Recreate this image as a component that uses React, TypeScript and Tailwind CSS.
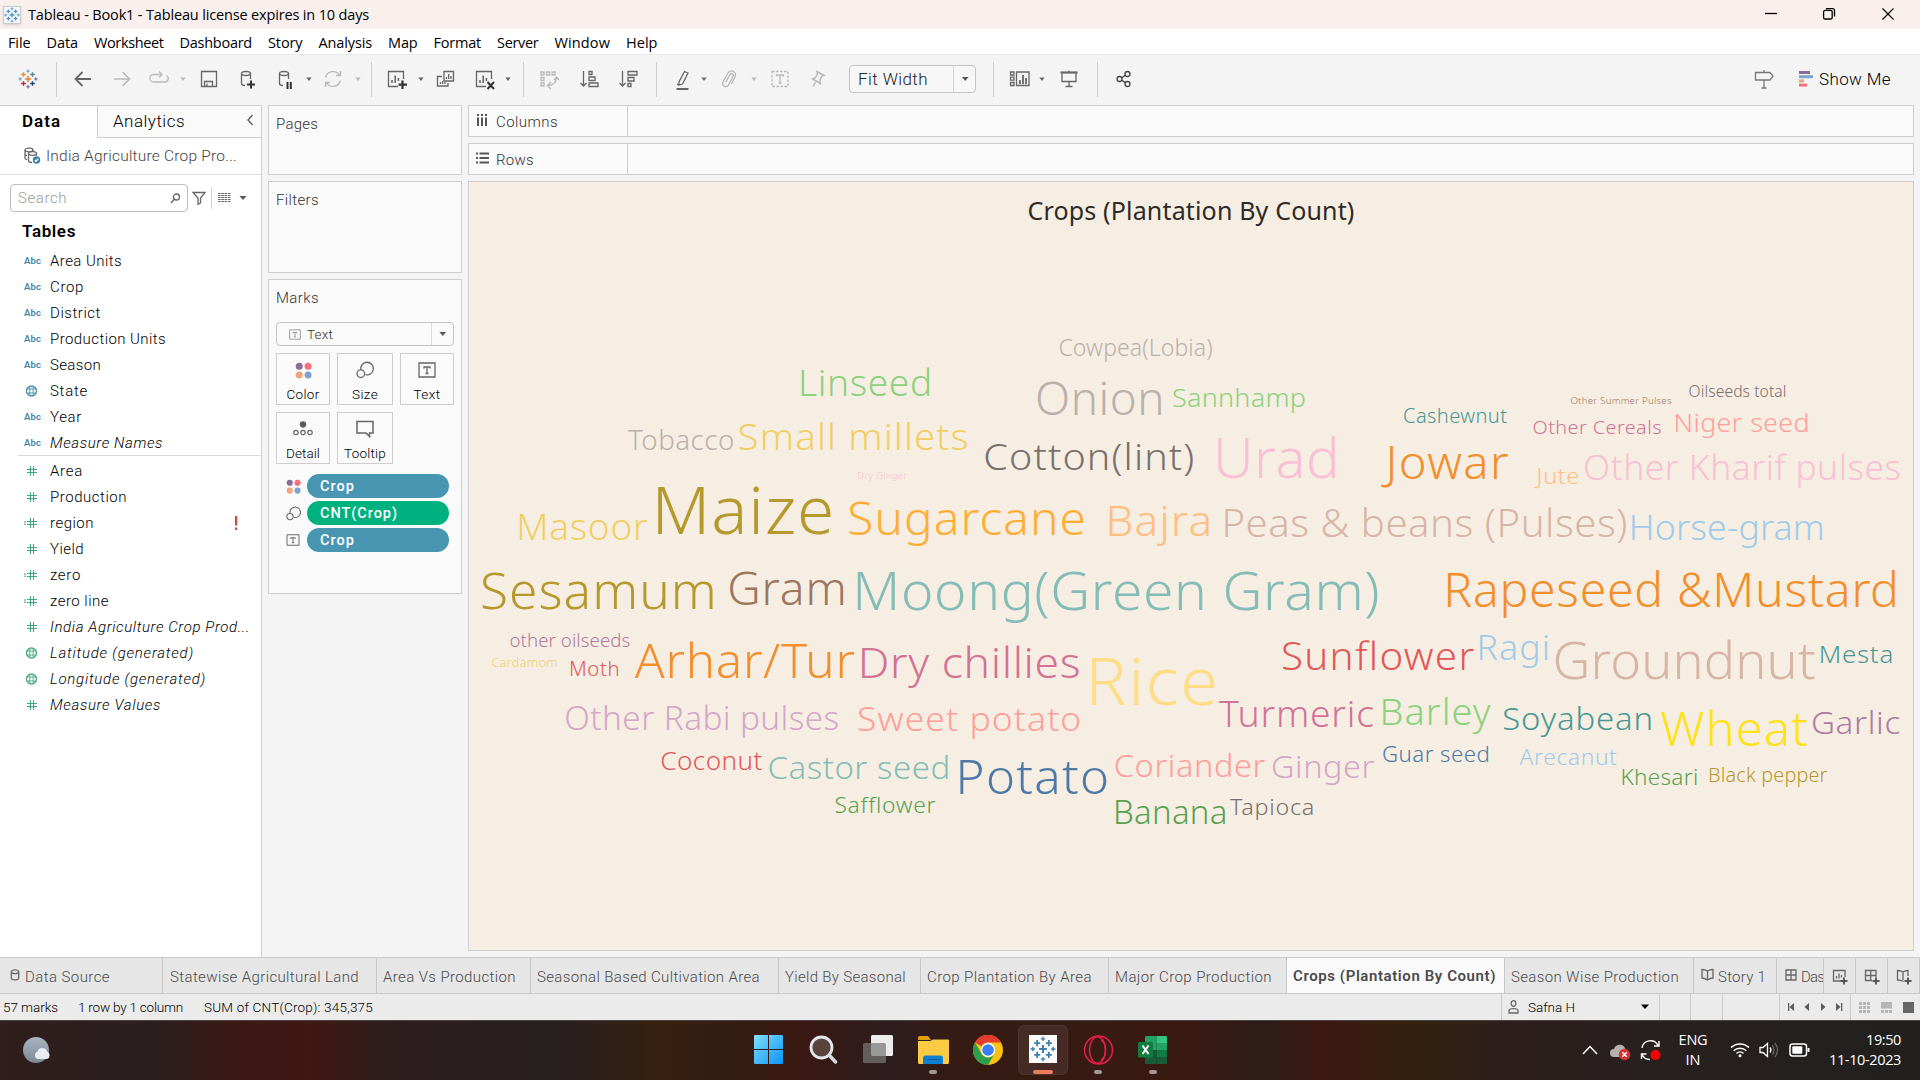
import React, { useLayoutEffect, useRef, useState } from "react";

/** Single-line label; when `w` is given the tracking is adjusted so that the text fills w pixels. */
function T({ children, w, className = "" }: { children: string; w?: number; className?: string }) {
  const ref = useRef<HTMLSpanElement>(null);
  const [ls, setLs] = useState(0);
  useLayoutEffect(() => {
    if (!w || !ref.current) return;
    const n = ref.current.getBoundingClientRect().width;
    setLs((w + 1 - n) / children.length);
  }, [w, children]);
  return (
    <span ref={ref} className={"inline-block shrink-0 whitespace-pre " + className} style={ls ? { letterSpacing: ls + "px" } : undefined}>
      {children}
    </span>
  );
}

type Word = [string, number, number, number, number, string];
// text, left, right, baseline, size, colour
const WORDS: Word[] = [
  ["Cowpea(Lobia)", 1059.4, 1212.3, 356, 22.9, "#bab0ac"],
  ["Linseed", 801, 929.5, 396, 36, "#8cd17d"],
  ["Tobacco", 628, 733.5, 449.7, 27, "#bab0ac"],
  ["Small millets", 738.6, 967.7, 449.7, 36, "#f1ce63"],
  ["Onion", 1037, 1161.8, 414.7, 45, "#bab0ac"],
  ["Sannhamp", 1173, 1305, 407, 26.5, "#8cd17d"],
  ["Cotton(lint)", 985.4, 1193, 469.5, 37, "#79706e"],
  ["Dry Ginger", 857.3, 907.6, 479, 9.2, "#fabfd2"],
  ["Maize", 657.6, 830.8, 533.3, 66, "#b6992d"],
  ["Sugarcane", 849.4, 1083.6, 534.7, 46, "#ffad34"],
  ["Bajra", 1109.7, 1209.6, 536, 42, "#ffbe7d"],
  ["Masoor", 519.3, 647.4, 540, 36, "#f1ce63"],
  ["Sesamum", 482, 713, 608.3, 50, "#b6992d"],
  ["Gram", 729.3, 843.4, 605, 45, "#9d7660"],
  ["Moong(Green Gram)", 857.3, 1377.6, 610, 54, "#86bcb6"],
  ["Urad", 1218, 1335.3, 477.7, 55.5, "#fabfd2"],
  ["Jowar", 1381.3, 1509, 479, 45, "#f28e2b"],
  ["Cashewnut", 1404, 1507.5, 423, 19.5, "#499894"],
  ["Other Summer Pulses", 1570.4, 1671, 403.7, 9.4, "#9d7660"],
  ["Oilseeds total", 1688.6, 1786, 397, 15.5, "#79706e"],
  ["Other Cereals", 1533.6, 1661.6, 434, 19, "#d37295"],
  ["Niger seed", 1675.6, 1808, 432, 26, "#ff9d9a"],
  ["Jute", 1534.5, 1578, 484, 22, "#ffbe7d"],
  ["Other Kharif pulses", 1585, 1900, 479.3, 34.5, "#fabfd2"],
  ["Peas & beans (Pulses)", 1224.5, 1626.7, 536.7, 39, "#d7b5a6"],
  ["Horse-gram", 1631.8, 1822, 540, 35.5, "#a0cbe8"],
  ["Rapeseed &Mustard", 1447.4, 1895.8, 606.7, 47, "#f28e2b"],
  ["other oilseeds", 510.5, 629.7, 647, 18.5, "#b07aa1"],
  ["Cardamom", 491.4, 556.6, 667, 12.2, "#f1ce63"],
  ["Moth", 570, 618, 676, 19.5, "#e15759"],
  ["Arhar/Tur", 634.8, 855, 678, 48, "#f28e2b"],
  ["Dry chillies", 862, 1079.4, 678, 43, "#d37295"],
  ["Rice", 1091.5, 1214.7, 705, 66, "#ffdd86"],
  ["Other Rabi pulses", 566.4, 838, 729.3, 32.5, "#d4a6c8"],
  ["Sweet potato", 858, 1079.4, 731, 33.5, "#ff9d9a"],
  ["Coconut", 661.3, 762.8, 770, 25.5, "#e15759"],
  ["Castor seed", 768.4, 948, 779, 32, "#86bcb6"],
  ["Potato", 959.8, 1107.3, 793.7, 47, "#4e79a7"],
  ["Coriander", 1114.8, 1265, 776.7, 31.5, "#ff9d9a"],
  ["Safflower", 835.5, 936, 812.7, 21.5, "#59a14f"],
  ["Banana", 1116, 1225, 824, 32.5, "#59a14f"],
  ["Sunflower", 1283, 1474.4, 669.7, 38, "#e15759"],
  ["Ragi", 1479.6, 1548, 660, 34, "#a0cbe8"],
  ["Groundnut", 1555.5, 1815, 678.3, 52, "#d7b5a6"],
  ["Mesta", 1820.8, 1892, 663, 24.6, "#499894"],
  ["Turmeric", 1218.9, 1373.9, 727, 36, "#d37295"],
  ["Barley", 1382.7, 1490.7, 724.7, 36, "#8cd17d"],
  ["Soyabean", 1503.3, 1651.4, 729.7, 31.5, "#499894"],
  ["Wheat", 1661, 1807.3, 746, 48, "#ffe119"],
  ["Garlic", 1812, 1900, 733.7, 32, "#b07aa1"],
  ["Ginger", 1272, 1373.9, 777.7, 31.5, "#d4a6c8"],
  ["Guar seed", 1383, 1489, 761.7, 21.5, "#4e79a7"],
  ["Arecanut", 1519.6, 1616.4, 765, 22, "#a0cbe8"],
  ["Khesari", 1622.5, 1697, 785, 22, "#59a14f"],
  ["Black pepper", 1709, 1827.8, 782, 19.5, "#b6992d"],
  ["Tapioca", 1230, 1312.4, 815, 22, "#79706e"],
];

function WordCloud() {
  const ctx = document.createElement("canvas").getContext("2d")!;
  return (
    <svg className="block h-full w-full" viewBox="469 182 1444 768" fontFamily="'Noto Sans', sans-serif" fontWeight={300}>
      {WORDS.map(([t, l, r, y, s, c]) => {
        ctx.font = `300 ${s}px "Noto Sans"`;
        const m = ctx.measureText(t);
        const ink = m.actualBoundingBoxLeft + m.actualBoundingBoxRight;
        // half of the slack widens the glyphs, the other half goes between them
        const k = (1 + (r - l) / ink) / 2;
        const gap = ((r - l) / k - ink) / (t.length - 1);
        return (
          <text key={t} transform={`translate(${l} ${y + 0.3}) scale(${k} 1)`} x={m.actualBoundingBoxLeft} fontSize={s} fill={c} letterSpacing={gap}>
            {t}
          </text>
        );
      })}
    </svg>
  );
}

function Svg({ children, w = 24, h = 24, c = "#666", className = "" }: { children: React.ReactNode; w?: number; h?: number; c?: string; className?: string }) {
  return (
    <svg width={w} height={h} viewBox={`0 0 ${w} ${h}`} fill="none" stroke={c} strokeWidth={1.3} className={"shrink-0 " + className}>
      {children}
    </svg>
  );
}

const OFF = "#b9b9b9";

function Caret({ c = "#666", className = "" }: { c?: string; className?: string }) {
  return (
    <svg width="8" height="8" viewBox="0 0 8 8" className={"shrink-0 " + className}>
      <path d="M1.4 2.5h5.2L4 6z" fill={c} />
    </svg>
  );
}

function Sep({ className = "" }: { className?: string }) {
  return <div className={"h-[35px] w-px shrink-0 bg-[#cfcfcf] " + className} />;
}

function Plus({ x, y, r, c, w = 1.4 }: { x: number; y: number; r: number; c: string; w?: number }) {
  return <path d={`M${x - r} ${y}h${2 * r}M${x} ${y - r}v${2 * r}`} stroke={c} strokeWidth={w} />;
}

function TableauMark({ size, mono, className = "" }: { size: number; mono?: string; className?: string }) {
  const c = (x: string) => mono || x;
  return (
    <svg width={size} height={size} viewBox="0 0 24 24" className={"shrink-0 " + className}>
      <Plus x={12} y={12} r={3.6} c={c("#eb812b")} w={1.9} />
      <Plus x={6.6} y={6.6} r={2.8} c={c("#eb912b")} w={1.7} />
      <Plus x={17.4} y={6.6} r={2.8} c={c("#5b879b")} w={1.7} />
      <Plus x={6.6} y={17.4} r={2.8} c={c("#c8203d")} w={1.7} />
      <Plus x={17.4} y={17.4} r={2.8} c={c("#1f447e")} w={1.7} />
      <Plus x={12} y={2.6} r={2.1} c={c("#7199a6")} w={1.2} />
      <Plus x={12} y={21.4} r={2.1} c={c("#5c6692")} w={1.2} />
      <Plus x={2.6} y={12} r={2.1} c={c("#7199a6")} w={1.2} />
      <Plus x={21.4} y={12} r={2.1} c={c("#5c6692")} w={1.2} />
    </svg>
  );
}

function TitleBar() {
  return (
    <header className="flex h-[29px] shrink-0 items-center bg-linear-to-r from-[#f9f0ee] via-[#f9efec] to-[#f9f0ee] pl-[3px] text-black">
      <div className="flex h-[18px] w-[18px] items-center justify-center border border-[#ccc] bg-[#f3f6f8] shadow">
        <TableauMark size={16} mono="#4f93c0" />
      </div>
      <T w={340} className="ml-[7px] font-['Open_Sans'] text-[14.5px]">Tableau - Book1 - Tableau license expires in 10 days</T>
      <Svg w={160} h={29} c="#000" className="ml-auto">
        <path d="M5 13.5h12" />
        <rect x="63.6" y="10.4" width="8.6" height="8.6" rx="1.6" />
        <path d="M66 8.6h6.5a2 2 0 0 1 2 2v6" />
        <path d="M122.5 8.5l11 11M133.5 8.5l-11 11" strokeWidth="1.1" />
      </Svg>
    </header>
  );
}

const MENU: [string, number][] = [["File", 22], ["Data", 31], ["Worksheet", 69], ["Dashboard", 72], ["Story", 34], ["Analysis", 53], ["Map", 29], ["Format", 47], ["Server", 41], ["Window", 55], ["Help", 31]];

function MenuBar() {
  return (
    <nav className="flex h-[25px] shrink-0 items-center gap-[16px] bg-white pt-[2px] pl-[8px] font-['Open_Sans'] text-[14.5px] text-black">
      {MENU.map(([m, w]) => (
        <T key={m} w={w - 0.5}>{m}</T>
      ))}
    </nav>
  );
}

function Toolbar() {
  return (
    <div className="flex h-[51px] shrink-0 items-center border-t border-[#e9e9e9] bg-[#f4f4f4] pb-[2px] pl-[17.5px]">
      <TableauMark size={20} className="mr-[2.5px]" />
      <Sep className="ml-[16px]" />
      <Svg className="ml-[14px]"><path d="M20 12H4.500M11.500 5l-7 7 7 7" strokeWidth="1.8" /></Svg>
      <Svg c={OFF} className="ml-[15px]"><path d="M4 12h15.500M12.500 5l7 7-7 7" strokeWidth="1.7" /></Svg>
      <Svg c={OFF} className="ml-[13px]"><path d="M14 7.500H6.500a3.500 3.500 0 0 0 0 7.500h11a3.500 3.500 0 0 0 2-6.500M12 4.500l3 3-3 3" /></Svg>
      <Caret c={OFF} className="ml-[8px]" />
      <Svg className="ml-[10px]"><path d="M4.500 4.500h15v15h-15zM7.500 19.500v-5h8v5M10 19.500v-3" /></Svg>
      <Svg className="ml-[14px]"><ellipse cx="11" cy="6.500" rx="4.500" ry="2" /><path d="M6.500 6.500v10c0 1 1.500 2 3.500 2M15.500 6.500V12" /><path d="M16 13.500v8M12 17.500h8" stroke="#333" strokeWidth="2" /></Svg>
      <Svg className="ml-[14px]"><ellipse cx="11" cy="6.500" rx="4.500" ry="2" /><path d="M6.500 6.500v10c0 1 1.500 2 3.500 2M15.500 6.500V12" /><path d="M14.500 15v7M17.800 15v7" stroke="#333" strokeWidth="2" /></Svg>
      <Caret className="ml-[8px]" />
      <Svg c={OFF} className="ml-[8px]"><path d="M4.500 10.500A7.800 7.800 0 0 1 18.500 8M19.500 13.500A7.800 7.800 0 0 1 5.500 16M19.500 4v4.500H15M4.500 20v-4.500H9" /></Svg>
      <Caret c={OFF} className="ml-[9px]" />
      <Sep className="ml-[9px]" />
      <Svg className="ml-[12px]"><path d="M14 19.500H4.500v-15h15V12" /><path d="M8 16v-3M11.200 16V8.500M14.400 14v-3" strokeWidth="1.600" /><path d="M18.500 13.500v8.500M14.500 17.700h8.500" stroke="#333" strokeWidth="2.200" /></Svg>
      <Caret className="ml-[9px]" />
      <Svg className="ml-[9px]"><path d="M10 4.500h9.500v9.500H10zM8 9.500H3.500v9.500H14v-3" /><path d="M12.500 12v-2M14.700 12V7M17 12V9M6.500 17v-2M8.700 17v-3M11 17v-2" /></Svg>
      <Svg className="ml-[14px]"><path d="M14 19.500H4.500v-15h15V12" /><path d="M8 16v-3M11.200 16V8.500M14.400 14v-3" strokeWidth="1.600" /><path d="M15.500 15l6.500 7M22 15l-6.500 7" stroke="#333" strokeWidth="2" /></Svg>
      <Caret className="ml-[8px]" />
      <Sep className="ml-[11px]" />
      <Svg c={OFF} className="ml-[13px]"><path d="M4 5h3v3H4zM9.500 5h3v3h-3zM15 5h3v3h-3zM4 10.500h3v3H4zM4 16h3v3H4zM19.500 10c0 5-2.500 8-8 8.500M14 15l-3.500 3.500L14 22M17 13l2.500-3 2.500 3" /></Svg>
      <Svg className="ml-[16px]"><path d="M6.500 4v15M3.500 16l3 3 3-3M12 4.500h3v3h-3zM12 10h6v3.500h-6zM12 16h9v3.500h-9z" /></Svg>
      <Svg className="ml-[15px]"><path d="M6.500 4v15M3.500 16l3 3 3-3M12 4.500h9v3.500h-9zM12 10.500h6V14h-6zM12 16.500h3v3h-3z" /></Svg>
      <Sep className="ml-[16px]" />
      <Svg className="ml-[14px]"><path d="M13.500 4.500l3.500 1.500-5.500 11-3.500 1 0-3zM6 17l2 1.500" /><path d="M5.500 22h12" strokeWidth="2" /></Svg>
      <Caret className="ml-[5px]" />
      <Svg c={OFF} className="ml-[9px]"><path d="M9 15l4-7.500a1.800 1.800 0 0 1 3.200 1.800l-5 9.200a3.200 3.200 0 0 1-5.500-3L11 6a3.900 3.900 0 0 1 7 3.800L14.500 17" /></Svg>
      <Caret c={OFF} className="ml-[9px]" />
      <Svg c={OFF} className="ml-[10px]"><path d="M4 4.500h16v15H4z" strokeDasharray="2.500 1.500" /><path d="M8.500 9.500V8h7v1.500M12 8v8M10.500 16h3" /></Svg>
      <Svg c={OFF} className="ml-[13px]"><path d="M12 4.500l7 4-2 .5-2 4 .5 3.500-8-4.500 3-1.500 2-4zM10.500 15L8 19.500" strokeWidth="1.500" /></Svg>
      <div className="ml-[20px] flex h-[28px] w-[127px] shrink-0 items-center rounded-sm border border-[#c4c4c4] bg-[#f7f7f7]">
        <T w={69} className="ml-[8px] pt-[2px] font-[Roboto] text-[17px] font-[350] text-[#222]">Fit Width</T>
        <div className="ml-auto flex h-full w-[22px] items-center justify-center border-l border-[#d4d4d4]"><svg width="8" height="6"><path d="M1 1h6.500L4.200 5z" fill="#555" /></svg></div>
      </div>
      <Sep className="ml-[17px]" />
      <Svg className="ml-[14px]"><path d="M8.500 5h12.500v13.500H8.500zM2.500 5h3.500v3H2.500zM2.500 10.200h3.500v3H2.500zM2.500 15.500h3.500v3H2.500z" /><path d="M12 17v-4M15 17V8M18 17v-6" strokeWidth="1.800" /></Svg>
      <Caret className="ml-[6px]" />
      <Svg className="ml-[11px]"><path d="M3.500 5.500h17" strokeWidth="2.200" /><path d="M5 6v8.500h14V6M12 3.500V5M12 15v4.500M8.500 19.500h7" /></Svg>
      <Sep className="ml-[16px]" />
      <Svg c="#444" className="ml-[14px]"><circle cx="7.500" cy="12" r="2.500" /><circle cx="15.500" cy="7" r="2.500" /><circle cx="15.500" cy="17" r="2.500" /><path d="M9.700 10.700l3.600-2.300M9.700 13.300l3.600 2.300" /></Svg>
      <Svg className="ml-auto" c="#777"><path d="M12 3v2M12 13v8M9.500 21h5M3.500 5.500h14.500l3 3.700-3 3.800H3.500z" /></Svg>
      <svg width="14" height="16" className="ml-[23px] shrink-0"><path d="M0 0h11v3H0z" fill="#8a6f95" /><path d="M0 4.200h14v3H0z" fill="#7fa3cd" /><path d="M0 8.400h5v3H0z" fill="#f0a57c" /><path d="M0 12.600h8v3H0z" fill="#f5707f" /></svg>
      <T w={71} className="ml-[6px] mr-[29px] pt-px font-[Roboto] text-[17px] font-[350] text-black">Show Me</T>
    </div>
  );
}

function Globe({ c }: { c: string }) {
  return (
    <Svg w={16} h={16} c={c}><circle cx="7.500" cy="8" r="5" /><path d="M2.500 6h10M2.500 10h10M5.800 3.500v9M9.200 3.500v9" strokeWidth=".9" /></Svg>
  );
}
function Hash({ calc }: { calc?: boolean }) {
  return (
    <Svg w={16} h={16} c="#3fa57f"><path d="M6.500 3v10M9.500 3v10M3 6.500h10M3 9.500h10" strokeWidth="1" />{calc && <path d="M-1 7h3M-1 9.200h3" strokeWidth="1" />}</Svg>
  );
}

type Field = [string, number, string, string?];
const DIMS: Field[] = [["Area Units", 71, "abc"], ["Crop", 33, "abc"], ["District", 50, "abc"], ["Production Units", 115, "abc"], ["Season", 50, "abc"], ["State", 37, "globe"], ["Year", 31, "abc"], ["Measure Names", 112, "abc", "i"]];
const MEAS: Field[] = [["Area", 32, "hash"], ["Production", 76, "hash"], ["region", 43, "calc", "!"], ["Yield", 33, "hash"], ["zero", 30, "calc"], ["zero line", 58, "calc"], ["India Agriculture Crop Prod...", 199, "hash", "i"], ["Latitude (generated)", 143, "gglobe", "i"], ["Longitude (generated)", 155, "gglobe", "i"], ["Measure Values", 110, "hash", "i"]];

function FieldRow({ f }: { f: Field }) {
  const [name, w, kind, flag] = f;
  return (
    <div className="flex h-[26px] items-center pl-[24px] pr-[23px]">
      <div className="flex w-[26px] shrink-0 items-center">
        {kind === "abc" && <T w={16} className="text-[9.5px] font-semibold text-[#4287a5]">Abc</T>}
        {kind === "globe" && <Globe c="#4a8fab" />}
        {kind === "gglobe" && <Globe c="#4aa982" />}
        {kind === "hash" && <Hash />}
        {kind === "calc" && <Hash calc />}
      </div>
      <T w={w} className={flag === "i" ? "text-[15px] font-[350] italic text-black" : "text-[15px] font-[350] text-black"}>{name}</T>
      {flag === "!" && (
        <svg width="4" height="14" className="ml-auto shrink-0"><path d="M1 0h2.300v9.500H1zM1 11.500h2.300V14H1z" fill="#cf4f44" /></svg>
      )}
    </div>
  );
}

function DataPane() {
  return (
    <aside className="flex w-[262px] shrink-0 flex-col border-t border-r border-[#cecece] bg-white font-[Roboto]">
      <div className="flex h-[32px] shrink-0">
        <div className="w-[97px] pl-[22px] pt-[3px]"><T w={38} className="text-[17px] font-semibold text-black">Data</T></div>
        <div className="flex flex-1 items-center border-b border-l border-[#cecece] bg-[#fafafa] pl-[15px] pr-[7px]">
          <T w={71} className="pt-px text-[17px] font-[350] text-black">Analytics</T>
          <Svg w={8} h={12} className="-mt-[3px] ml-auto"><path d="M6.500 1L2 6l4.500 5" strokeWidth="1.500" /></Svg>
        </div>
      </div>
      <div className="flex h-[37px] shrink-0 items-center border-b border-[#dedede] pl-[23px]">
        <Svg w={18} h={18}><ellipse cx="6" cy="3" rx="4" ry="1.800" /><path d="M2 3v8c0 1 1 1.500 2 1.700M2 7c0 1 1 1.500 2 1.500M10 3v1" /><ellipse cx="9.500" cy="6.500" rx="4" ry="1.800" /><path d="M5.500 6.500v7c0 1 1.500 2 3.500 2M13.500 6.500v2" /><circle cx="13.500" cy="13" r="3.700" fill="#3b82a6" stroke="none" /><path d="M11.800 13l1.200 1.300 2.200-2.500" stroke="#fff" /></Svg>
        <T w={190} className="ml-[5px] pt-px text-[15.500px] font-[350] text-[#444]">India Agriculture Crop Pro...</T>
      </div>
      <div className="mt-[9px] flex h-[28px] shrink-0 items-center pl-[10px]">
        <div className="flex h-full w-[178px] items-center rounded-sm border border-[#bdbdbd] pl-[7px] pr-[6px]">
          <T w={48} className="text-[15px] font-[350] text-[#999]">Search</T>
          <Svg w={11} h={11} className="ml-auto"><circle cx="6.500" cy="4" r="3" /><path d="M4.400 6.300L1 10" /></Svg>
        </div>
        <Svg w={14} h={14} className="ml-[4px]"><path d="M1 1.500h12L8.500 7v5L6 13.500V7z" /></Svg>
        <div className="ml-[5px] h-[22px] w-px bg-[#cfcfcf]" />
        <Svg w={13} h={10} className="ml-[6px]"><path d="M0 .5h12.500M0 2.500h12.500M0 4.500h12.500M0 6.500h12.500M0 8.500h12.500" strokeDasharray="2.600 .7" strokeWidth="1" /></Svg>
        <svg width="8" height="6" className="ml-[8px]"><path d="M.5 1h7L4 5z" fill="#555" /></svg>
      </div>
      <div className="flex h-[35px] shrink-0 items-center pl-[22px] pt-[5px]"><T w={53} className="text-[17px] font-semibold text-black">Tables</T></div>
      <div className="h-[208px] shrink-0 pt-px">{DIMS.map((f) => <FieldRow key={f[0]} f={f} />)}</div>
      <div className="ml-[18px] h-px bg-[#dadada]" />
      <div className="pt-[2px]">{MEAS.map((f) => <FieldRow key={f[0]} f={f} />)}</div>
    </aside>
  );
}

function ColorDots({ s }: { s: number }) {
  return (
    <svg width={s} height={s} viewBox="0 0 16 16" className="shrink-0"><circle cx="4" cy="4" r="3.300" fill="#8a6f95" /><circle cx="12.300" cy="4" r="3.300" fill="#f5707f" /><circle cx="4" cy="12.300" r="3.300" fill="#f0a57c" /><circle cx="12.300" cy="12.300" r="3.300" fill="#7fa3cd" /></svg>
  );
}
function SizeIcon({ s }: { s: number }) {
  return (
    <svg width={s} height={s} viewBox="0 0 18 18" fill="none" stroke="#666" strokeWidth="1.300" className="shrink-0"><path d="M4.800 8.500a6.300 6.300 0 1 1 4.800 5.200" /><circle cx="4.800" cy="12.700" r="3.800" /></svg>
  );
}
function TextIcon({ w, h }: { w: number; h: number }) {
  return (
    <svg width={w} height={h} viewBox="0 0 18 16" fill="none" stroke="#666" strokeWidth="1.300" className="shrink-0"><path d="M1 1h16v14H1zM6 6.500V5h6v1.500M9 5v6.500M7.500 11.500h3" /></svg>
  );
}

const card = "border border-[#cecece] bg-[#fafafa] pl-[7px]";

function MarkButton({ w, label, children }: { w: number; label: string; children: React.ReactNode }) {
  return (
    <div className="flex h-[52px] flex-col items-center border border-[#cecece] bg-[#fafafa] pt-[6px]">
      <div className="flex h-[20px] items-center">{children}</div>
      <T w={w} className="mt-[5px] text-[13.500px] leading-[18px] font-[350] text-black">{label}</T>
    </div>
  );
}

function Pill({ icon, label, w, green }: { icon: React.ReactNode; label: string; w: number; green?: boolean }) {
  return (
    <div className="flex h-[24px] items-center">
      <div className="flex w-[31px] items-center pl-[10px]">{icon}</div>
      <div className={green ? "flex h-full w-[142px] items-center rounded-full bg-[#00b180] pl-[13px] pt-px" : "flex h-full w-[142px] items-center rounded-full bg-[#4996b2] pl-[13px] pt-px"}>
        <T w={w} className="text-[14.500px] font-medium text-white">{label}</T>
      </div>
    </div>
  );
}

function Shelves() {
  return (
    <div className="ml-[6px] flex w-[194px] shrink-0 flex-col gap-[6px] font-[Roboto] text-[#333]">
      <section className={"h-[70px] pt-[6px] " + card}><T w={41} className="text-[15px] font-[350]">Pages</T></section>
      <section className={"h-[92px] pt-[6px] " + card}><T w={42} className="text-[15px] font-[350]">Filters</T></section>
      <section className={"h-[315px] pt-[6px] " + card}>
        <T w={42} className="text-[15px] font-[350]">Marks</T>
        <div className="mt-[12px] flex h-[24px] w-[178px] items-center rounded-sm border border-[#c4c4c4] pl-[12px]">
          <div className="opacity-70"><TextIcon w={12} h={11} /></div>
          <T w={25} className="ml-[6px] text-[13.500px] font-[350]">Text</T>
          <div className="ml-auto flex h-full w-[22px] items-center justify-center border-l border-[#dadada]"><svg width="8" height="6"><path d="M.5 1h6.500L3.700 5z" fill="#555" /></svg></div>
        </div>
        <div className="mt-[7px] grid w-[178px] grid-cols-[54px_56px_54px] gap-[7px]">
          <MarkButton w={32} label="Color"><ColorDots s={17} /></MarkButton>
          <MarkButton w={25} label="Size"><SizeIcon s={18} /></MarkButton>
          <MarkButton w={26} label="Text"><TextIcon w={18} h={16} /></MarkButton>
          <MarkButton w={33} label="Detail">
            <svg width="20" height="16" fill="none" stroke="#666" strokeWidth="1.200"><circle cx="10" cy="3.500" r="2.700" fill="#555" /><circle cx="3" cy="11.500" r="2.200" /><circle cx="10" cy="11.500" r="2.200" /><circle cx="17" cy="11.500" r="2.200" /></svg>
          </MarkButton>
          <MarkButton w={41} label="Tooltip">
            <Svg w={20} h={18}><path d="M2 1.500h16v11.500h-3.500v3.500L11 13H2z" strokeWidth="1.500" /></Svg>
          </MarkButton>
        </div>
        <div className="mt-[10px] flex flex-col gap-[3px]">
          <Pill icon={<ColorDots s={15} />} label="Crop" w={34} />
          <Pill icon={<SizeIcon s={15} />} label="CNT(Crop)" w={77} green />
          <Pill icon={<TextIcon w={14} h={12} />} label="Crop" w={34} />
        </div>
      </section>
    </div>
  );
}

function Shelf({ label, w, icon }: { label: string; w: number; icon: React.ReactNode }) {
  return (
    <div className="flex h-[32px] border border-[#cecece] bg-[#fafafa]">
      <div className="flex w-[159px] items-center border-r border-[#cecece] pt-[2px] pl-[7px]">
        {icon}
        <T w={w} className="ml-[8px] text-[15px] font-[350] text-[#333]">{label}</T>
      </div>
    </div>
  );
}

function Sheet() {
  return (
    <main className="ml-[6px] flex w-[1446px] flex-col gap-[6px] font-[Roboto]">
      <Shelf label="Columns" w={61} icon={<Svg w={12} h={12} c="#555" className="-mt-[4px]"><path d="M2 3.500V12M6 3.500V12M10 3.500V12M2 0v2M6 0v2M10 0v2" strokeWidth="2" /></Svg>} />
      <Shelf label="Rows" w={37} icon={<Svg w={13} h={12} c="#555" className="-mr-px -mt-[4px]"><path d="M3.500 1.500H13M3.500 6H13M3.500 10.500H13M0 1.500h2M0 6h2M0 10.500h2" strokeWidth="1.800" /></Svg>} />
      <section className="grid h-[770px] border border-[#cecece] bg-[#f6eee3]">
        <div className="col-start-1 row-start-1 flex justify-center pt-[11px]">
          <T w={326} className="font-['Noto_Sans'] text-[25px] leading-[34px] text-[#2e2a27]">Crops (Plantation By Count)</T>
        </div>
        <div className="col-start-1 row-start-1"><WordCloud /></div>
      </section>
    </main>
  );
}

const tab = "flex shrink-0 items-center overflow-hidden border-r border-[#c6c6c6] pt-[3px] text-[15px] text-[#4a4a4a] ";

function SheetTabs() {
  return (
    <div className="flex h-[37px] shrink-0 border-y border-[#c9c9c9] bg-[#e6e6e6] font-[Roboto] font-[350]">
      <div className={tab + "w-[163px] pl-[10px]"}><Svg w={10} h={12} className="-mt-[5px]"><ellipse cx="5" cy="2.800" rx="3.700" ry="1.900" /><path d="M1.300 3v6c0 2.500 7.400 2.500 7.400 0V3" /></Svg><T w={84} className="ml-[5px]">Data Source</T></div>
      <div className={tab + "w-[214px] pl-[7px]"}><T w={188}>Statewise Agricultural Land</T></div>
      <div className={tab + "w-[154px] pl-[6px]"}><T w={132}>Area Vs Production</T></div>
      <div className={tab + "w-[248px] pl-[6px]"}><T w={222}>Seasonal Based Cultivation Area</T></div>
      <div className={tab + "w-[142px] pl-[6px]"}><T w={120}>Yield By Seasonal</T></div>
      <div className={tab + "w-[188px] pl-[6px]"}><T w={164}>Crop Plantation By Area</T></div>
      <div className={tab + "w-[178px] pl-[6px]"}><T w={156}>Major Crop Production</T></div>
      <div className="flex w-[218px] shrink-0 items-center border-r border-[#c6c6c6] bg-[#fafafa] pt-px pl-[6px] text-[15px] font-semibold text-[#4a4a4a]"><T w={202}>Crops (Plantation By Count)</T></div>
      <div className={tab + "w-[189px] pl-[6px]"}><T w={167}>Season Wise Production</T></div>
      <div className={tab + "w-[83px] pl-[7px]"}><Svg w={13} h={13} className="-mt-[5px]"><path d="M1 1.500c2 0 3 0 5.500 1.500C9 1.500 10 1.500 12 1.500v8.500c-2 0-3 .5-5.500 2C4 10.500 3 10 1 10zM6.500 3v9" /></Svg><T w={47} className="ml-[4px]">Story 1</T></div>
      <div className={tab + "w-[47px] pl-[8px]"}><Svg w={12} h={12} className="-mt-[5px]"><path d="M1 1h10v10H1zM6 1v10M1 6h10" /></Svg><T w={22} className="ml-[4px]">Das</T></div>
      <div className={tab + "w-[32px] justify-center"}><Svg w={16} h={16}><path d="M10 12H1.500V1.500H13V8M4.500 9.500V7M7 9.500v-5M9.500 8.500V6" /><path d="M12 8.500v7M8.500 12h7" stroke="#555" strokeWidth="1.900" /></Svg></div>
      <div className={tab + "w-[32px] justify-center"}><Svg w={16} h={16}><path d="M8 11.500H1.500v-10H12V8M6.700 1.500v10M1.500 6.500H12" /><path d="M12 8.500v7M8.500 12h7" stroke="#555" strokeWidth="1.900" /></Svg></div>
      <div className={tab + "w-[32px] justify-center"}><Svg w={16} h={16}><path d="M7.500 12.500C5 11 4 11 1.500 11V1.500c2 0 3.500 0 5.500 1.500 2-1.500 3-1.500 5-1.500V7M7 3v8" /><path d="M12 8.500v7M8.500 12h7" stroke="#555" strokeWidth="1.900" /></Svg></div>
    </div>
  );
}

function StatusBar() {
  return (
    <div className="flex h-[26px] shrink-0 items-center bg-[#ebebeb] pl-[3px] font-[Roboto] text-[13.500px] font-[350] text-black">
      <T w={54}>57 marks</T>
      <T w={104} className="ml-[20px]">1 row by 1 column</T>
      <T w={168} className="ml-[21px]">SUM of CNT(Crop): 345,375</T>
      <div className="ml-auto flex h-full w-[158px] items-center border-l border-[#cbcbcb] pl-[6px]">
        <Svg w={11} h={14}><ellipse cx="5.500" cy="3.500" rx="2.300" ry="2.800" /><path d="M1 13V10.500c0-2.500 9-2.500 9 0V13z" /></Svg>
        <T w={46} className="ml-[9px]">Safna H</T>
        <svg width="8" height="6" className="ml-auto mr-[10px]"><path d="M0 .5h8L4 5z" fill="#000" /></svg>
      </div>
      <div className="h-full w-[31px] border-l border-[#cbcbcb]" />
      <div className="h-full w-[32px] border-l border-[#cbcbcb]" />
      <div className="h-full w-[57px] border-l border-[#cbcbcb]" />
      <div className="flex h-full w-[71px] items-center border-l border-[#cbcbcb]">
        <svg width="70" height="10" fill="#5a5a5a"><path d="M8 1h1.300v8H8zM14 1v8L9.500 5zM29 1v8l-4.500-4zM41 1v8l4.500-4zM56 1v8l4.500-4zM61 1h1.300v8H61z" /></svg>
      </div>
      <div className="flex h-full w-[70px] items-center gap-[11px] border-l border-[#cbcbcb] pl-[8px]">
        <svg width="11" height="11" fill="#b5b5b5"><path d="M0 0h3v3H0zM4 0h3v3H4zM8 0h3v3H8zM0 4h3v3H0zM4 4h3v3H4zM8 4h3v3H8zM0 8h3v3H0zM4 8h3v3H4zM8 8h3v3H8z" /></svg>
        <svg width="11" height="11" fill="#b5b5b5"><path d="M0 0h11v6.500H0zM0 8h3v3H0zM4 8h3v3H4zM8 8h3v3H8z" /></svg>
        <svg width="11" height="11" fill="#666"><path d="M0 0h11v11H0z" /></svg>
      </div>
    </div>
  );
}

function TaskIcon({ children, dot, active }: { children: React.ReactNode; dot?: boolean; active?: boolean }) {
  return (
    <div className={active ? "flex h-[50px] w-[50px] flex-col items-center justify-between rounded-md border border-white/5 bg-white/7 pt-[9px]" : "flex h-[50px] w-[50px] flex-col items-center justify-between border border-transparent pt-[9px]"}>
      {children}
      {active && <div className="h-[4px] w-[20px] shrink-0 rounded-full bg-[#ee7d60]" />}
      {dot && <div className="h-[4px] w-[8px] shrink-0 rounded-full bg-[#a39997]" />}
    </div>
  );
}

function Taskbar() {
  return (
    <footer className="flex h-[60px] shrink-0 items-center border-t border-[#4b4340] bg-[linear-gradient(90deg,#301d1d_0px,#2a1f1f_150px,#3c1814_240px,#3f1713_310px,#2d1e1e_390px,#271f20_560px,#37200f_660px,#331d12_720px,#391812_800px,#2e1d1f_890px,#351b14_960px,#371b13_1060px,#381912_1200px,#2c1c19_1260px,#3b1811_1320px,#33210f_1420px,#2c1e1c_1500px,#28201f_1650px,#21201f_1920px)] pb-px">
      <svg width="30" height="32" className="ml-[22px]">
        <defs><linearGradient id="sky" x1="0" y1="0" x2="0" y2="1"><stop offset="0" stopColor="#a9b6c2" /><stop offset="1" stopColor="#7c8893" /></linearGradient></defs>
        <circle cx="14" cy="16" r="13" fill="url(#sky)" />
        <path d="M15.500 25a4 4 0 0 1 0-7.500 5 5 0 0 1 9.500 0 4 4 0 0 1 0 7.500z" fill="#e9edf1" />
      </svg>
      <div className="ml-[691px] flex gap-[5px]">
        <TaskIcon><svg width="29" height="29"><defs><linearGradient id="win" x1="0" y1="0" x2="1" y2="1"><stop offset="0" stopColor="#7fe0ff" /><stop offset="1" stopColor="#0c92f5" /></linearGradient></defs><path d="M0 1a1 1 0 0 1 1-1h13v14H0zM15 0h13a1 1 0 0 1 1 1v13H15zM0 15h14v14H1a1 1 0 0 1-1-1zM15 15h14v13a1 1 0 0 1-1 1H15z" fill="url(#win)" /></svg></TaskIcon>
        <TaskIcon><svg width="29" height="29" fill="none"><circle cx="12.500" cy="12.500" r="10.500" stroke="#e6e6ea" strokeWidth="2.800" fill="#5a433c" /><path d="M20.500 20.500l6 6.500" stroke="#d7dade" strokeWidth="3.500" strokeLinecap="round" /></svg></TaskIcon>
        <TaskIcon><svg width="31" height="29"><rect x="8" y="0" width="22" height="21" rx="1.500" fill="#ececec" /><rect x="0" y="8" width="23" height="20" rx="1.500" fill="#777" fillOpacity=".72" /></svg></TaskIcon>
        <TaskIcon dot><svg width="31" height="28" className="mt-px"><path d="M0 1.500A1.500 1.500 0 0 1 1.500 0H10l3 4H0z" fill="#e09d10" /><path d="M0 5h12l3-1.500h15A1 1 0 0 1 31 4.500v22A1.500 1.500 0 0 1 29.500 28h-28A1.500 1.500 0 0 1 0 26.500z" fill="#fcca45" /><path d="M5 28v-6a2.500 2.500 0 0 1 2.500-2.500h15A2.500 2.500 0 0 1 25 22v6z" fill="#0f7fd0" /><path d="M9 23.500h13" stroke="#0a5ca3" /></svg></TaskIcon>
        <TaskIcon>
          <svg width="30" height="30" viewBox="-15 -15 30 30"><circle r="15" fill="#fbc116" /><path d="M-13 -7.500A15 15 0 0 1 13 -7.500H0A7.500 7.500 0 0 0 -6.500 -3.750z" fill="#e33b2e" /><path d="M-13 -7.500A15 15 0 0 0 0 15L6.500 3.750A7.500 7.500 0 0 1 -6.500 3.750z" fill="#2c9f4b" /><circle r="7.200" fill="#fff" /><circle r="5.800" fill="#3b7ef2" /></svg>
        </TaskIcon>
        <TaskIcon active><div className="flex h-[28px] w-[28px] items-center justify-center bg-[#fbfbfb]"><TableauMark size={26} mono="#3e81ad" /></div></TaskIcon>
        <TaskIcon dot><svg width="31" height="30" fill="none" stroke="#e51f45" strokeWidth="1.500"><circle cx="15.500" cy="15" r="14" /><ellipse cx="14.500" cy="15" rx="8" ry="13.200" /><path d="M18 5c6 3 6 17 0 20" /></svg></TaskIcon>
        <TaskIcon dot>
          <svg width="30" height="28" className="mt-px"><path d="M7 1a1 1 0 0 1 1-1h10.500v14H7z" fill="#21a366" /><path d="M18.500 0H28a1 1 0 0 1 1 1v6H18.500z" fill="#33c481" /><path d="M18.500 7H29v7H18.500z" fill="#21a366" /><path d="M7 14h11.500v14H8a1 1 0 0 1-1-1z" fill="#185c37" /><path d="M18.500 14H29v7H18.500z" fill="#107c41" /><path d="M18.500 21H29v6a1 1 0 0 1-1 1h-9.500z" fill="#185c37" /><rect y="6" width="15" height="15.500" rx="1" fill="#107c41" /><path d="M4.500 9.500l6 8.500M10.500 9.500l-6 8.500" stroke="#fff" strokeWidth="2" /></svg>
        </TaskIcon>
      </div>
      <Svg w={16} h={10} c="#fff" className="ml-auto"><path d="M1 9l7-7.500L15 9" strokeWidth="1.500" /></Svg>
      <svg width="21" height="18" className="ml-[12px] mt-[3px]"><path d="M4 14a4 4 0 0 1 0-8 6 6 0 0 1 11-1l2 9z" fill="#b5b1b0" /><circle cx="14.500" cy="11.500" r="5.700" fill="#d32f35" /><path d="M12.300 9.300l4.400 4.400M16.700 9.300l-4.400 4.400" stroke="#fff" strokeWidth="1.500" /></svg>
      <svg width="21" height="22" fill="none" stroke="#fff" strokeWidth="1.400" className="ml-[9px]"><path d="M2 9A8.500 8.500 0 0 1 18 6.500M19 2v5h-5M1.500 20v-5h5M2 15.500a8.500 8.500 0 0 0 8 5" /><circle cx="15.500" cy="16" r="5" fill="#f00" stroke="none" /></svg>
      <div className="ml-[16px] flex w-[32px] flex-col items-center font-['Open_Sans'] text-[14.500px] leading-[20px] text-white"><T w={28}>ENG</T><T w={14}>IN</T></div>
      <Svg w={20} h={16} c="#fff" className="ml-[21px]"><path d="M1 5.500a13 13 0 0 1 18 0M3.700 8.700a9 9 0 0 1 12.600 0M6.500 11.500a5 5 0 0 1 7 0" strokeWidth="1.500" /><circle cx="10" cy="13.800" r="1.500" fill="#fff" stroke="none" /></Svg>
      <Svg w={20} h={18} c="#fff" className="ml-[9px]"><path d="M1 6.500h3L8.500 2.500v13L4 11.500H1zM11 6.500a4 4 0 0 1 0 5" /><path d="M13.300 4.300a7 7 0 0 1 0 9.400M15.800 2a10.500 10.500 0 0 1 0 14" stroke="#6b6563" /></Svg>
      <Svg w={21} h={14} c="#fff" className="ml-[10px]"><rect x="1" y="1" width="16.500" height="12" rx="2.500" strokeWidth="1.500" /><rect x="3.300" y="3.300" width="10" height="7.400" rx="1" fill="#fff" stroke="none" /><path d="M19.500 5v4" strokeWidth="2" /></Svg>
      <div className="ml-[9px] mr-[19px] flex w-[82px] flex-col items-end font-['Open_Sans'] text-[14.500px] leading-[20px] text-white"><T w={34}>19:50</T><T w={71}>11-10-2023</T></div>
    </footer>
  );
}

export default function App() {
  return (
    <div className="flex h-[1080px] w-[1920px] flex-col overflow-hidden bg-[#f4f4f4]">
      <TitleBar />
      <MenuBar />
      <Toolbar />
      <div className="flex h-[852px] shrink-0">
        <DataPane />
        <Shelves />
        <Sheet />
      </div>
      <SheetTabs />
      <StatusBar />
      <Taskbar />
    </div>
  );
}
